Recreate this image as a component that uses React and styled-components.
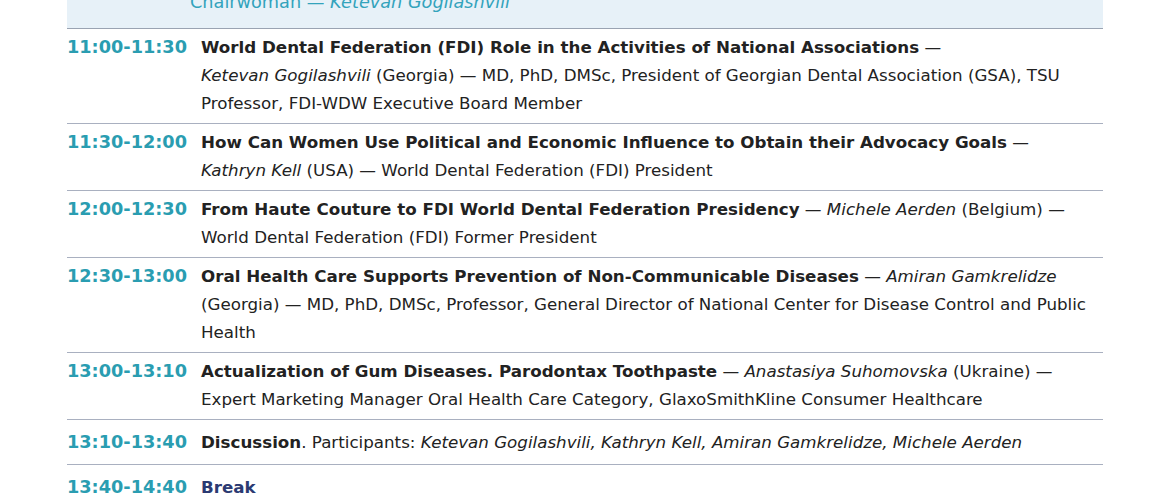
import styled, { createGlobalStyle } from 'styled-components';

const GlobalStyle = createGlobalStyle`
    html, body {
        margin: 0;
        padding: 0;
        background: #ffffff;
    }
    body {
        font-family: "DejaVu Sans", "Liberation Sans", sans-serif;
        overflow: hidden;
    }
`;

const items = [
    {
        time: "11:00-11:30",
        title: "World Dental Federation (FDI) Role in the Activities of National Associations",
        speaker: "Ketevan Gogilashvili",
        rest: " (Georgia) — MD, PhD, DMSc, President of Georgian Dental Association (GSA), TSU Professor, FDI-WDW Executive Board Member",
    },
    {
        time: "11:30-12:00",
        title: "How Can Women Use Political and Economic Influence to Obtain their Advocacy Goals",
        speaker: "Kathryn Kell",
        rest: " (USA) — World Dental Federation (FDI) President",
    },
    {
        time: "12:00-12:30",
        title: "From Haute Couture to FDI World Dental Federation Presidency",
        speaker: "Michele Aerden",
        rest: " (Belgium) — World Dental Federation (FDI) Former President",
    },
    {
        time: "12:30-13:00",
        title: "Oral Health Care Supports Prevention of Non-Communicable Diseases",
        speaker: "Amiran Gamkrelidze",
        rest: " (Georgia) — MD, PhD, DMSc, Professor, General Director of National Center for Disease Control and Public Health",
    },
    {
        time: "13:00-13:10",
        title: "Actualization of Gum Diseases. Parodontax Toothpaste",
        speaker: "Anastasiya Suhomovska",
        rest: " (Ukraine) — Expert Marketing Manager Oral Health Care Category, GlaxoSmithKline Consumer Healthcare",
    },
];

function App() {
    return (
        <>
            <GlobalStyle />
            <Program>
                <Chair>
                    <ChairText>
                        Chairwoman — <em>Ketevan Gogilashvili</em>
                    </ChairText>
                </Chair>
                {items.map((item, index) => (
                    <Row key={index}>
                        <Time>{item.time}</Time>
                        <Content>
                            <strong>{item.title}</strong> — <Speaker>{item.speaker}</Speaker>{item.rest}
                        </Content>
                    </Row>
                ))}
                <Row $single>
                    <Time>13:10-13:40</Time>
                    <Content>
                        <strong>Discussion</strong>. Participants: <em>Ketevan Gogilashvili, Kathryn Kell, Amiran Gamkrelidze, Michele Aerden</em>
                    </Content>
                </Row>
                <Row $single $last>
                    <Time>13:40-14:40</Time>
                    <Content>
                        <Break>Break</Break>
                    </Content>
                </Row>
            </Program>
        </>
    );
}

const Program = styled.div`
    width: 1036px;
    margin-left: 67px;
    color: #222222;
`;

const Chair = styled.div`
    display: flow-root;
    background-color: #e7f1f8;
    border-bottom: 1px solid #9aa3b2;
    padding: 0 0 0 123px;
    height: 29px;
    box-sizing: border-box;
`;

const ChairText = styled.div`
    margin-top: -12px;
    font-size: 17.7px;
    line-height: 28px;
    color: #33a3bc;
    white-space: nowrap;
    em {
        font-style: italic;
    }
`;

const Row = styled.div`
    display: flex;
    align-items: flex-start;
    gap: 14px;
    padding: ${p => (p.$single ? '8px 0 8px' : '4px 0 6px')};
    border-bottom: ${p => (p.$last ? 'none' : '1px solid #a9b0c0')};
`;

const Time = styled.div`
    flex: 0 0 120px;
    font-size: 17.7px;
    font-weight: bold;
    line-height: 28px;
    color: #2a9db1;
    white-space: nowrap;
`;

const Content = styled.div`
    flex: 1;
    font-size: 16.7px;
    line-height: 28px;
    color: #222222;
    strong {
        font-weight: bold;
    }
    em {
        font-style: italic;
    }
`;

const Speaker = styled.em`
    font-style: italic;
    white-space: nowrap;
`;

const Break = styled.strong`
    color: #2b3a72;
`;

export default App;
